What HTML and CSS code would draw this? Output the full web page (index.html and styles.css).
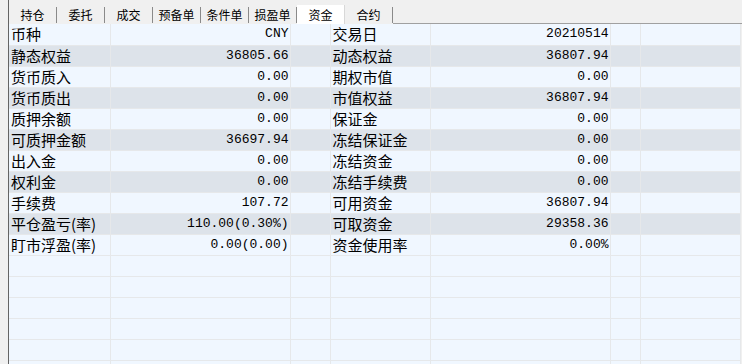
FILE: index.html
```html
<!DOCTYPE html>
<html lang="zh">
<head>
<meta charset="utf-8">
<link rel="stylesheet" href="styles.css">
</head>
<body>
<div class="panel">
  <div class="tabbar">
    <div class="tab">持仓</div>
    <div class="tab">委托</div>
    <div class="tab">成交</div>
    <div class="tab">预备单</div>
    <div class="tab">条件单</div>
    <div class="tab">损盈单</div>
    <div class="tab active">资金</div>
    <div class="tab">合约</div>
    <div class="filler"></div>
  </div>
  <table class="grid">
    <colgroup>
      <col class="c1"><col class="c2"><col class="c3"><col class="c4"><col class="c5"><col class="c6"><col class="c7">
    </colgroup>
    <tbody>
      <tr class="l"><td class="lab">币种</td><td class="val">CNY</td><td></td><td class="lab">交易日</td><td class="val">20210514</td><td></td><td></td></tr>
      <tr class="d"><td class="lab">静态权益</td><td class="val">36805.66</td><td></td><td class="lab">动态权益</td><td class="val">36807.94</td><td></td><td></td></tr>
      <tr class="l"><td class="lab">货币质入</td><td class="val">0.00</td><td></td><td class="lab">期权市值</td><td class="val">0.00</td><td></td><td></td></tr>
      <tr class="d"><td class="lab">货币质出</td><td class="val">0.00</td><td></td><td class="lab">市值权益</td><td class="val">36807.94</td><td></td><td></td></tr>
      <tr class="l"><td class="lab">质押余额</td><td class="val">0.00</td><td></td><td class="lab">保证金</td><td class="val">0.00</td><td></td><td></td></tr>
      <tr class="d"><td class="lab">可质押金额</td><td class="val">36697.94</td><td></td><td class="lab">冻结保证金</td><td class="val">0.00</td><td></td><td></td></tr>
      <tr class="l"><td class="lab">出入金</td><td class="val">0.00</td><td></td><td class="lab">冻结资金</td><td class="val">0.00</td><td></td><td></td></tr>
      <tr class="d"><td class="lab">权利金</td><td class="val">0.00</td><td></td><td class="lab">冻结手续费</td><td class="val">0.00</td><td></td><td></td></tr>
      <tr class="l"><td class="lab">手续费</td><td class="val">107.72</td><td></td><td class="lab">可用资金</td><td class="val">36807.94</td><td></td><td></td></tr>
      <tr class="d"><td class="lab">平仓盈亏(率)</td><td class="val">110.00(0.30%)</td><td></td><td class="lab">可取资金</td><td class="val">29358.36</td><td></td><td></td></tr>
      <tr class="l"><td class="lab">盯市浮盈(率)</td><td class="val">0.00(0.00)</td><td></td><td class="lab">资金使用率</td><td class="val">0.00%</td><td></td><td></td></tr>
      <tr class="l"><td></td><td></td><td></td><td></td><td></td><td></td><td></td></tr>
      <tr class="l"><td></td><td></td><td></td><td></td><td></td><td></td><td></td></tr>
      <tr class="l"><td></td><td></td><td></td><td></td><td></td><td></td><td></td></tr>
      <tr class="l"><td></td><td></td><td></td><td></td><td></td><td></td><td></td></tr>
      <tr class="l"><td></td><td></td><td></td><td></td><td></td><td></td><td></td></tr>
      <tr class="l"><td></td><td></td><td></td><td></td><td></td><td></td><td></td></tr>
    </tbody>
  </table>
</div>
</body>
</html>
```

FILE: styles.css
```css
html, body {
  margin: 0;
  padding: 0;
  background: #f0f0f0;
  width: 742px;
  height: 364px;
  overflow: hidden;
}

.panel {
  margin-left: 8px;
  border-left: 1px solid #646464;
  height: 364px;
  overflow: hidden;
}

.tabbar {
  display: flex;
  align-items: flex-end;
  height: 24px;
}

.tab {
  box-sizing: border-box;
  width: 48px;
  height: 16px;
  border-right: 1px solid #8a8a8a;
  font-family: "Noto Sans CJK SC", sans-serif;
  font-size: 12px;
  line-height: 16px;
  text-align: center;
  color: #000;
  background: #f0f0f0;
  margin-bottom: 1px;
}

.tab.active {
  background: #ffffff;
  height: 19px;
  line-height: 19px;
  margin-bottom: 0;
  border-right: 1px solid #d8d8d8;
}

.filler {
  flex: 1;
  height: 0;
  border-bottom: 1px solid #a0a0a0;
}

.grid {
  border-collapse: collapse;
  table-layout: fixed;
  width: 731px;
}

.c1 { width: 101px; }
.c2 { width: 180px; }
.c3 { width: 40px; }
.c4 { width: 100px; }
.c5 { width: 180px; }
.c6 { width: 30px; }
.c7 { width: 100px; }

.grid td {
  box-sizing: border-box;
  height: 21px;
  padding: 0;
  border-right: 1px solid #e6e8ea;
  border-bottom: 1px solid #e6e8ea;
  white-space: nowrap;
  overflow: hidden;
  color: #000;
  line-height: 19px;
}

.grid tr.l td { background: #f0f7ff; }
.grid tr.d td { background: #dde3ea; }

.grid td.lab {
  font-family: "Noto Sans CJK SC", sans-serif;
  font-size: 15px;
  padding-left: 2px;
  padding-bottom: 1px;
}

.grid td.val {
  font-family: "Liberation Mono", "Noto Sans CJK SC", monospace;
  font-size: 13px;
  text-align: right;
  padding-right: 1px;
  padding-bottom: 1px;
}
```
